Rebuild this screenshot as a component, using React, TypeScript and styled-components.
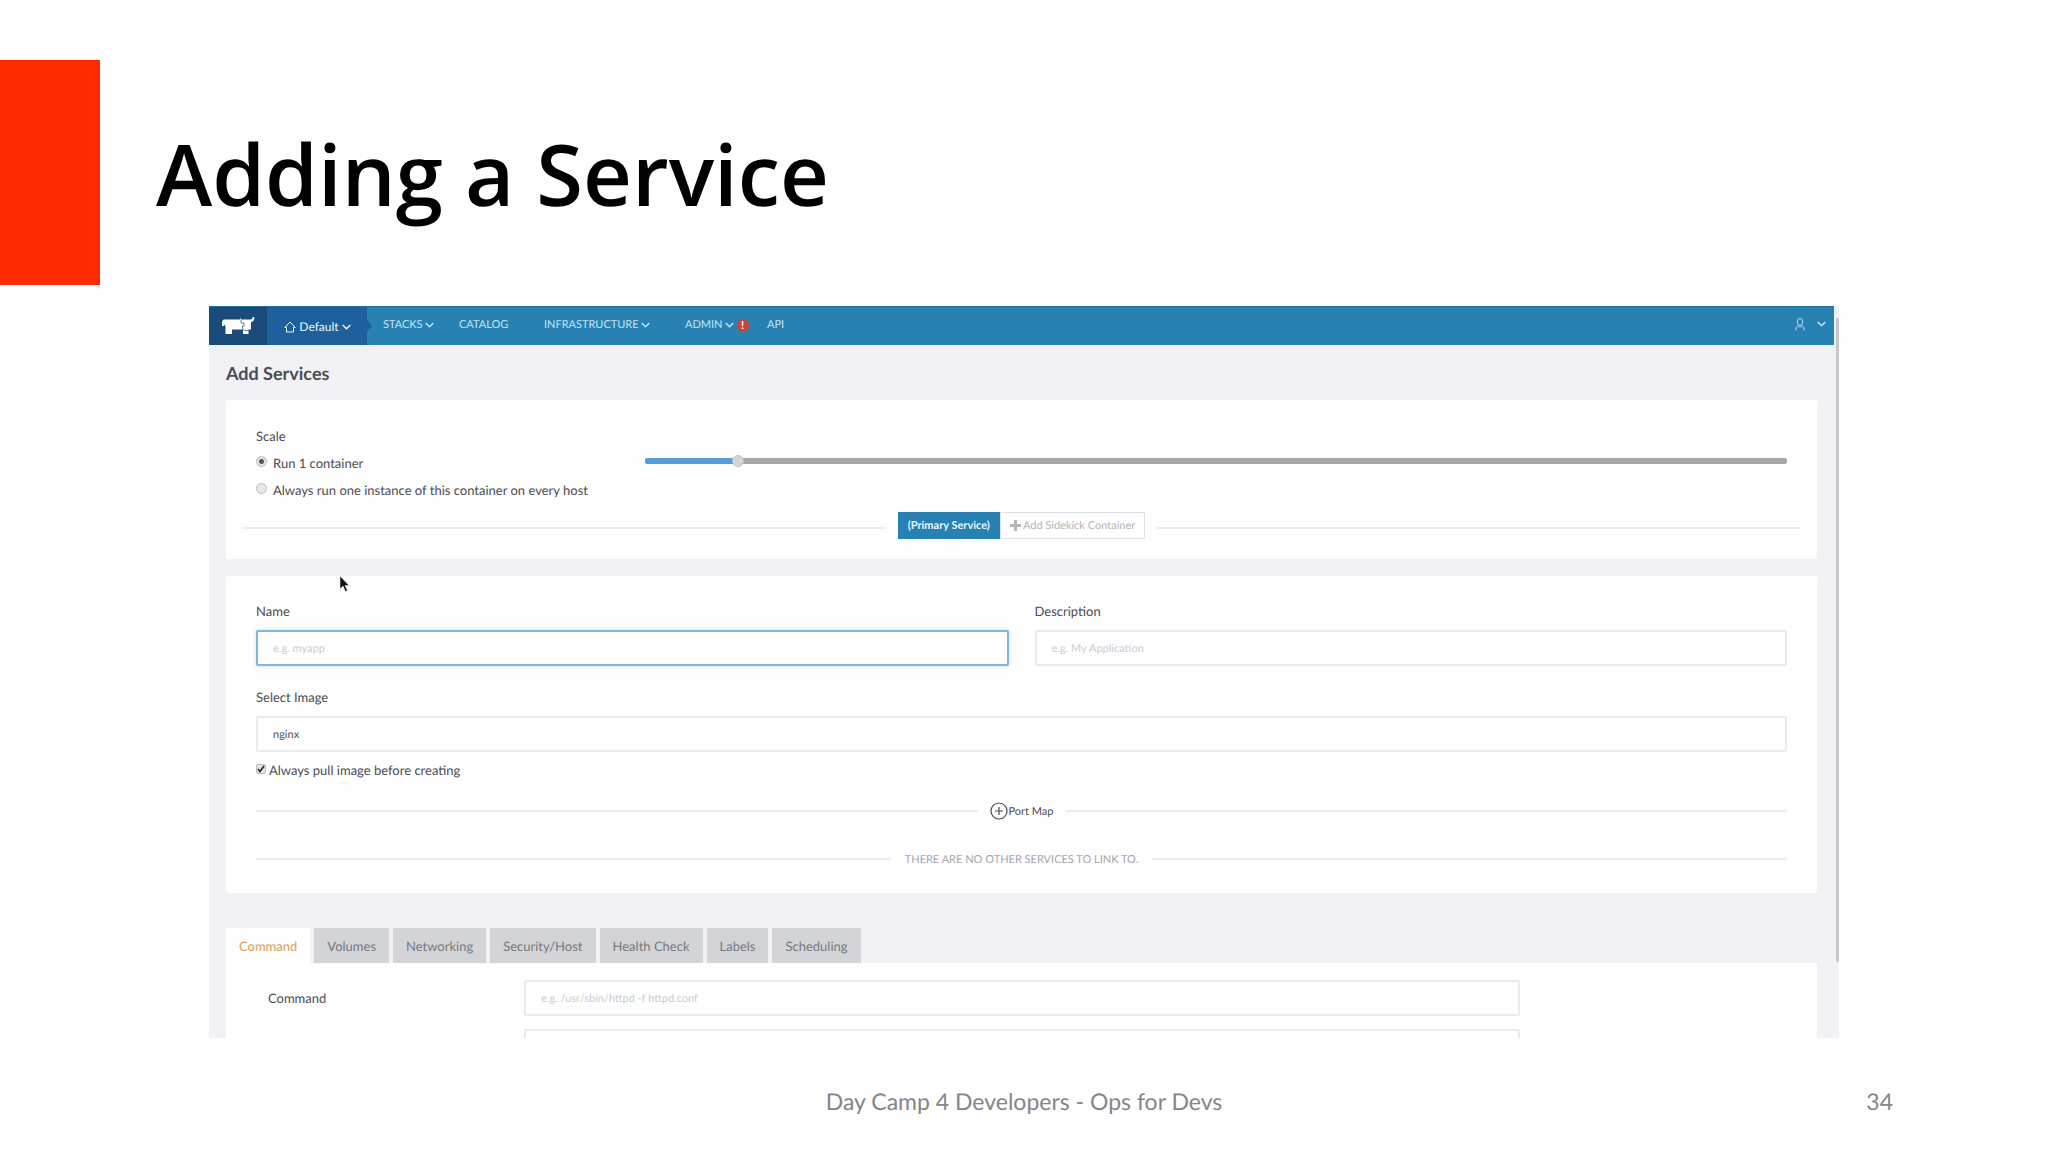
import React, { useState } from "react";
import styled, { createGlobalStyle } from "styled-components";

const GlobalStyle = createGlobalStyle`
  *, *::before, *::after { box-sizing: border-box; }
  body { margin: 0; background: #fefefe; }
  button, input { font: inherit; color: inherit; text-rendering: inherit; }
`;

const Slide = styled.div`
  display: flex;
  flex-direction: column;
  height: 100vh;
  min-height: 700px;
  padding-top: 60px;
  overflow: hidden;
  font-family: Lato, sans-serif;
  text-rendering: geometricPrecision;
  color: #4c4d52;
`;
const SlideHeader = styled.header`
  display: flex;
  align-items: center;
  gap: 56px;
  height: 225px;
  flex: none;
`;
const Accent = styled.div`
  width: 100px;
  align-self: stretch;
  background: #ff2a00;
`;
const SlideTitle = styled.h1`
  margin: 0;
  font: 600 85px/120px "Open Sans", sans-serif;
  color: #000;
`;
const SlideFooter = styled.footer`
  display: grid;
  grid-template-columns: 1fr auto 1fr;
  align-items: center;
  flex: none;
  height: 114px;
  padding: 12px 155px 0;
  font-size: 23px;
  line-height: 32px;
  color: #858589;
`;
const FooterText = styled.span`
  grid-column: 2;
`;
const PageNumber = styled.span`
  justify-self: end;
`;

const Browser = styled.section`
  position: relative;
  flex: 1 1 0;
  min-height: 0;
  margin: 21px 209px 0;
  display: flex;
  overflow: hidden;
  background: #f2f2f6;
`;
const Page = styled.div`
  flex: 1;
  min-width: 0;
`;
const ScrollTrack = styled.div`
  width: 5px;
  padding: 12px 0 76px 2px;
  display: flex;
`;
const ScrollThumb = styled.div`
  flex: 1;
  border-radius: 2px;
  background: #c5c5c9;
`;

const Nav = styled.nav`
  display: flex;
  align-items: stretch;
  height: 39px;
  background: #2781b3;
  border-top: 1px solid #1f6f9f;
  color: #c3e5f4;
  font-size: 11px;
  line-height: 16px;
`;
const Brand = styled.a`
  width: 58px;
  display: flex;
  align-items: center;
  justify-content: center;
  background: #1b4b7b;
`;
const Environment = styled.button`
  position: relative;
  width: 100px;
  padding: 1px 0 0 1px;
  border: 0;
  display: flex;
  align-items: center;
  justify-content: center;
  gap: 3px;
  background: #1d609b;
  color: #e8f6fc;
  font-size: 12px;
  &::after {
    content: "";
    position: absolute;
    left: 100%;
    top: 13px;
    border: solid transparent;
    border-width: 6px 0 6px 5px;
    border-left-color: #1d609b;
  }
`;
const Menu = styled.div`
  display: flex;
  align-items: center;
  padding: 0 0 2px 16px;
`;
const MenuItem = styled.a<{ $width: number }>`
  width: ${(p) => p.$width}px;
  display: flex;
  align-items: center;
  gap: 2px;
  color: inherit;
  text-decoration: none;
`;
const Alert = styled.span`
  width: 12px;
  height: 13px;
  margin-left: 1px;
  border-radius: 6px;
  background: #cb4236;
  color: #fff;
  font: 700 11px/13px Lato, sans-serif;
  text-align: center;
`;
const UserMenu = styled.button`
  margin-left: auto;
  padding: 0 8px 4px 0;
  border: 0;
  background: none;
  display: flex;
  align-items: center;
  gap: 12px;
`;

const Content = styled.main`
  padding: 0 17px;
`;
const PageTitle = styled.h2`
  margin: 0;
  height: 55px;
  font-size: 18px;
  line-height: 56px;
  font-weight: 700;
`;
const Card = styled.section<{ $bottom: number }>`
  margin-bottom: 17px;
  padding: 24px 30px ${(p) => p.$bottom}px;
  background: #fefefe;
  border-radius: 2px;
`;
const Label = styled.label`
  display: block;
  font-size: 13px;
  line-height: 22px;
`;
const Legend = styled.div`
  font-size: 13px;
  line-height: 24px;
`;
const ScaleRow = styled.div`
  display: grid;
  grid-template-columns: 389px 1fr;
  padding-top: 1px;
`;
const Choice = styled.label`
  display: flex;
  align-items: center;
  gap: 6px;
  height: 27px;
  font-size: 13px;
`;
const Radio = styled.input`
  appearance: none;
  flex: none;
  width: 11px;
  height: 11px;
  margin: 0 0 2px;
  border: 1px solid #bcbcc0;
  border-radius: 50%;
  background: #e8e8ea;
  &:checked {
    background: radial-gradient(circle, #55565a 0 2px, #e4e4e6 3px);
  }
`;
const Slider = styled.input<{ $fill: number }>`
  appearance: none;
  width: 100%;
  height: 12px;
  margin: 6px 0 0;
  background: none;
  &::-webkit-slider-runnable-track {
    height: 6px;
    border-radius: 2px;
    background: linear-gradient(to right, #539fd9 ${(p) => p.$fill}%, #a7a7aa ${(p) => p.$fill}%);
  }
  &::-webkit-slider-thumb {
    appearance: none;
    width: 12px;
    height: 12px;
    margin-top: -3px;
    border: 1px solid #bfc2c6;
    border-radius: 50%;
    background: #d3d6d9;
  }
`;
const Divider = styled.div<{ $gap: number; $height: number; $bleed?: number }>`
  display: flex;
  align-items: center;
  gap: ${(p) => p.$gap}px;
  height: ${(p) => p.$height}px;
  margin: 0 -${(p) => p.$bleed || 0}px;
  &::before, &::after {
    content: "";
    flex: 1;
    height: 2px;
    background: #ebebef;
  }
`;
const ButtonGroup = styled.div`
  display: flex;
  padding-bottom: 5px;
`;
const GroupButton = styled.button<{ $primary?: boolean }>`
  height: 27px;
  padding: 0 9px;
  display: flex;
  align-items: center;
  gap: 2px;
  font-size: 11px;
  border: 1px solid ${(p) => (p.$primary ? "#2781b3" : "#e1e2e8")};
  background: ${(p) => (p.$primary ? "#2781b3" : "#fefefe")};
  color: ${(p) => (p.$primary ? "#e6f7ff" : "#b4b5b9")};
  font-weight: ${(p) => (p.$primary ? 700 : 400)};
`;
const FieldGrid = styled.div`
  display: grid;
  grid-template-columns: 1fr 1fr;
  gap: 26px;
`;
const Field = styled.div`
  display: flex;
  flex-direction: column;
  gap: 8px;
`;
const TextInput = styled.input`
  display: block;
  width: 100%;
  height: 36px;
  padding: 0 15px;
  border: 2px solid #ebebef;
  border-radius: 2px;
  background: #fefefe;
  font-size: 11px;
  outline: none;
  &::placeholder { color: #ccccd2; opacity: 1; }
  &:focus {
    border-color: #84b4dc;
    box-shadow: 0 0 5px #c4e4f8;
  }
`;
const ImageField = styled(Field)`
  margin-top: 20px;
`;
const CheckLine = styled.label`
  display: flex;
  align-items: center;
  gap: 3px;
  height: 36px;
  font-size: 13px;
`;
const Tick = styled.input`
  appearance: none;
  flex: none;
  width: 10px;
  height: 10px;
  margin: 0 0 2px;
  border: 1px solid #bdbdc1;
  border-radius: 2px;
  background: #e3e3e6;
  &:checked {
    background: #e3e3e6 url("data:image/svg+xml,%3Csvg xmlns='http://www.w3.org/2000/svg' viewBox='0 0 8 8'%3E%3Cpath d='M1 4l2 2.5L7 1' fill='none' stroke='%23333' stroke-width='1.8'/%3E%3C/svg%3E");
  }
`;
const PortButton = styled.button`
  padding: 0;
  border: 0;
  background: none;
  display: flex;
  align-items: center;
  gap: 1px;
  font-size: 11px;
`;
const Note = styled.span`
  font-size: 11px;
  color: #a5a6aa;
`;
const Tabs = styled.div`
  display: flex;
  gap: 4px;
  margin-top: 35px;
`;
const Tab = styled.button<{ $active: boolean }>`
  height: 35px;
  padding: 0 13px;
  border: 0;
  font-size: 13px;
  background: ${(p) => (p.$active ? "#fefefe" : "#d2d4d8")};
  color: ${(p) => (p.$active ? "#e09a55" : "#77797e")};
`;
const Panel = styled.div`
  display: grid;
  grid-template-columns: 256px minmax(0, 996px);
  align-items: center;
  row-gap: 13px;
  padding: 17px 42px;
  background: #fefefe;
`;
const PanelInput = styled(TextInput)`
  grid-column: 2;
`;
const Pointer = styled.svg`
  position: absolute;
  left: 130px;
  top: 269px;
`;

const Chevron = () => (
  <svg width="9" height="6" viewBox="0 0 9 6" fill="none" stroke="currentColor" strokeWidth="1.500" aria-hidden="true">
    <path d="M.7 1 4.500 4.800 8.300 1" />
  </svg>
);

const CowLogo = () => (
  <svg width="34" height="18" viewBox="0 0 34 18" fill="#fff" aria-hidden="true">
    <path d="M2.500 2.500H19V1l1.500 1.500h8.500c1.800 0 2.700-.8 2.800-2.500h1.500c.3 2.800-.8 4.800-3.300 5.200V12.500h-2.500V17h-5.500v-4.500H11V17H4.500v-6.500L4 7.500 2.500 9H1V4.500z" />
    <path d="M20 2.500v3.500h3v3h-1.500v3l2 1.500h4" fill="none" stroke="#1b4b7b" strokeWidth=".7" />
  </svg>
);

const MENU = [
  { label: "STACKS", arrow: true, width: 76 },
  { label: "CATALOG", width: 85 },
  { label: "INFRASTRUCTURE", arrow: true, width: 141 },
  { label: "ADMIN", arrow: true, alert: true, width: 82 },
  { label: "API", width: 40 },
];

const TABS = ["Command", "Volumes", "Networking", "Security/Host", "Health Check", "Labels", "Scheduling"];
const MAX_SCALE = 130;

export default function App() {
  const [tab, setTab] = useState("Command");
  const [scale, setScale] = useState(10);
  return (
    <>
      <GlobalStyle />
      <Slide>
        <SlideHeader>
          <Accent />
          <SlideTitle>Adding a Service</SlideTitle>
        </SlideHeader>

        <Browser>
          <Page>
            <Nav>
              <Brand href="#" aria-label="Home"><CowLogo /></Brand>
              <Environment>
                <svg width="12" height="12" viewBox="0 0 12 12" fill="none" stroke="currentColor" aria-hidden="true">
                  <path d="M.8 6.500 6 1l5.200 5.500H9.500V11h-7V6.500z" />
                </svg>
                Default
                <Chevron />
              </Environment>
              <Menu>
                {MENU.map((m) => (
                  <MenuItem key={m.label} href="#" $width={m.width}>
                    {m.label}
                    {m.arrow && <Chevron />}
                    {m.alert && <Alert>!</Alert>}
                  </MenuItem>
                ))}
              </Menu>
              <UserMenu aria-label="Account">
                <svg width="10" height="13" viewBox="0 0 10 13" fill="none" stroke="currentColor" strokeWidth=".9" aria-hidden="true">
                  <ellipse cx="5" cy="4" rx="2.800" ry="3.400" />
                  <path d="M1 12.500V10c0-1 1-1.500 2.300-2L5 9.200 6.700 8C8 8.500 9 9 9 10v2.500" />
                </svg>
                <Chevron />
              </UserMenu>
            </Nav>

            <Content>
              <PageTitle>Add Services</PageTitle>

              <Card $bottom={7}>
                <Legend>Scale</Legend>
                <ScaleRow>
                  <div>
                    <Choice><Radio type="radio" name="scale" defaultChecked />Run 1 container</Choice>
                    <Choice><Radio type="radio" name="scale" />Always run one instance of this container on every host</Choice>
                  </div>
                  <Slider
                    type="range"
                    aria-label="Number of containers"
                    min={0}
                    max={MAX_SCALE}
                    value={scale}
                    $fill={(scale / MAX_SCALE) * 100}
                    onChange={(e) => setScale(Number(e.target.value))}
                  />
                </ScaleRow>
                <Divider $gap={12} $height={49} $bleed={14}>
                  <ButtonGroup>
                    <GroupButton $primary>(Primary Service)</GroupButton>
                    <GroupButton>
                      <svg width="11" height="11" viewBox="0 0 11 11" fill="currentColor" aria-hidden="true">
                        <path d="M4 0h3v4h4v3H7v4H4V7H0V4h4z" />
                      </svg>
                      Add Sidekick Container
                    </GroupButton>
                  </ButtonGroup>
                </Divider>
              </Card>

              <Card $bottom={9}>
                <FieldGrid>
                  <Field>
                    <Label htmlFor="name">Name</Label>
                    <TextInput id="name" placeholder="e.g. myapp" autoFocus />
                  </Field>
                  <Field>
                    <Label htmlFor="description">Description</Label>
                    <TextInput id="description" placeholder="e.g. My Application" />
                  </Field>
                </FieldGrid>
                <ImageField>
                  <Label htmlFor="image">Select Image</Label>
                  <TextInput id="image" defaultValue="nginx" />
                </ImageField>
                <CheckLine><Tick type="checkbox" defaultChecked />Always pull image before creating</CheckLine>
                <Divider $gap={12} $height={46}>
                  <PortButton>
                    <svg width="18" height="18" viewBox="0 0 18 18" fill="none" stroke="currentColor" strokeWidth="1.200" aria-hidden="true">
                      <circle cx="9" cy="9" r="8" />
                      <path d="M9 5v8M5 9h8" />
                    </svg>
                    Port Map
                  </PortButton>
                </Divider>
                <Divider $gap={14} $height={50}>
                  <Note>THERE ARE NO OTHER SERVICES TO LINK TO.</Note>
                </Divider>
              </Card>

              <Tabs role="tablist">
                {TABS.map((t) => (
                  <Tab key={t} role="tab" aria-selected={t === tab} $active={t === tab} onClick={() => setTab(t)}>
                    {t}
                  </Tab>
                ))}
              </Tabs>
              <Panel role="tabpanel">
                <Label htmlFor="command">Command</Label>
                <PanelInput id="command" placeholder="e.g. /usr/sbin/httpd -f httpd.conf" />
                <PanelInput aria-label="Entry point" />
              </Panel>
            </Content>
          </Page>
          <ScrollTrack><ScrollThumb /></ScrollTrack>
          <Pointer width="11" height="18" viewBox="0 0 11 18" aria-hidden="true">
            <path d="M1 1v13l3-3 2.500 5.500 2-1L6 10.500h4z" fill="#111" stroke="#ddd" strokeWidth=".6" />
          </Pointer>
        </Browser>

        <SlideFooter>
          <FooterText>Day Camp 4 Developers - Ops for Devs</FooterText>
          <PageNumber>34</PageNumber>
        </SlideFooter>
      </Slide>
    </>
  );
}
